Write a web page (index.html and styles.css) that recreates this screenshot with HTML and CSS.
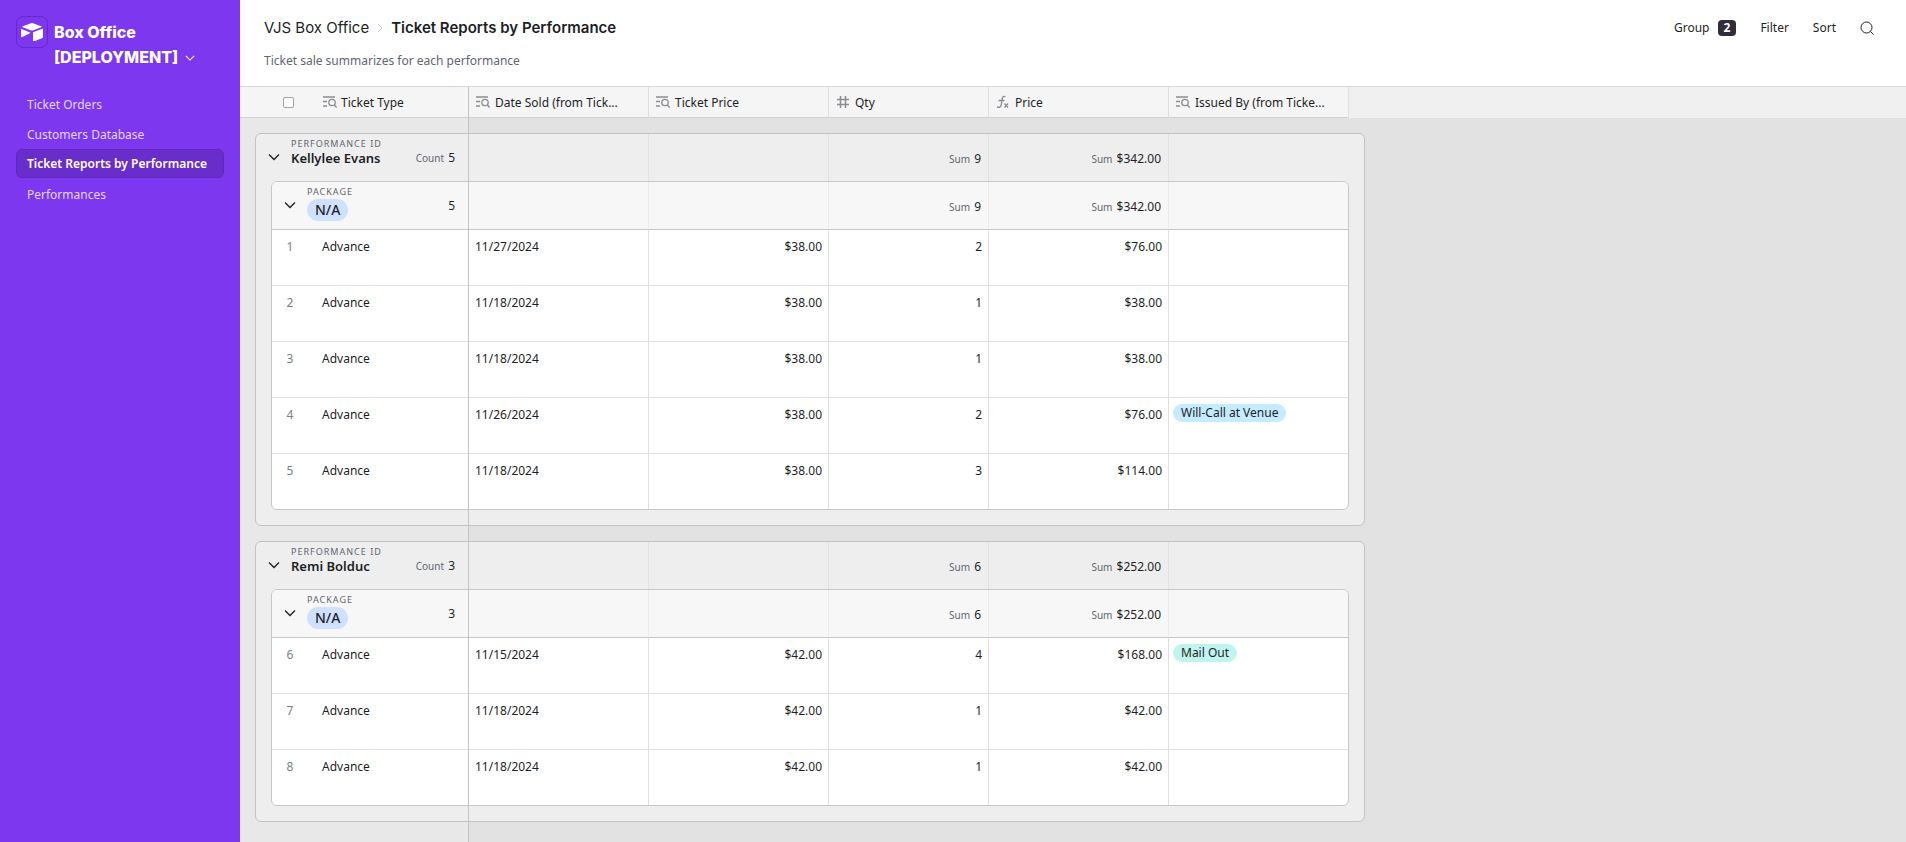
FILE: index.html
```html
<!DOCTYPE html>
<html lang="en">
<head>
<meta charset="utf-8">
<title>Ticket Reports by Performance</title>
<link rel="stylesheet" href="styles.css">
</head>
<body>
<svg class="sprite" aria-hidden="true">
  <symbol id="lookup" viewBox="0 0 14 14"><path d="M0 2h12M0 6.500h4M0 11h4" stroke-width="1.500"/><circle cx="9" cy="7.500" r="3.200" stroke-width="1.300"/><path d="M11.200 9.800l2.400 2.700" stroke-width="1.400"/></symbol>
  <symbol id="hash" viewBox="0 0 14 14"><path d="M1 4.500h12M1 9.500h12M4.500 1v12M9.500 1v12" stroke-width="1.500"/></symbol>
  <symbol id="formula" viewBox="0 0 14 14"><path d="M9.500 1.600C7 .8 6.500 2 6.200 4L5.200 10c-.3 2-1.700 2.800-4.200 2M2.500 5.500h6" stroke-width="1.400"/><path d="M8.500 8.500l3.500 4M12 8.500L8.500 12.500" stroke-width="1.300"/></symbol>
  <symbol id="down" viewBox="0 0 12 12"><path d="M1 3.500l5 5 5-5" stroke-width="1.300"/></symbol>
</svg>
<div class="app">
  <aside class="sidebar">
    <div class="brand">
      <span class="logo"><svg viewBox="0 0 22 18"><path d="M1.300 3.500L10 .3q1-.4 2 0l8.700 3.200q.6.300 0 .6L12 7.400q-1 .4-2 0L1.300 4.100q-.6-.3 0-.6zM12 9.300L21.300 5.700q.6-.2.600.4v8.200q0 .5-.4.700L12.600 18.500q-.6.200-.6-.4zM.1 6.300q0-.6.600-.4L9 9.400q.6.400 0 .8L.7 14.200q-.6.200-.6-.4z"/></svg></span>
      <button class="brand-name" type="button">Box Office [DEPLOYMENT] <svg class="icon small"><use href="#down"/></svg></button>
    </div>
    <nav class="nav">
      <a href="#">Ticket Orders</a>
      <a href="#">Customers Database</a>
      <a href="#" class="active" aria-current="page">Ticket Reports by Performance</a>
      <a href="#">Performances</a>
    </nav>
  </aside>
  <main class="main">
    <header class="top">
      <div>
        <div class="crumbs"><a href="#">VJS Box Office</a><svg class="crumb-arrow" viewBox="0 0 6 10"><path d="M1 1l4 4-4 4"/></svg><h1>Ticket Reports by Performance</h1></div>
        <p class="subtitle">Ticket sale summarizes for each performance</p>
      </div>
      <div class="tools">
        <button type="button">Group <span class="count-badge">2</span></button>
        <button type="button">Filter</button>
        <button type="button">Sort</button>
        <button type="button" aria-label="Search"><svg class="search" viewBox="0 0 14 14"><circle cx="6.500" cy="6.500" r="5.500"/><path d="M10.500 10.500l3 3"/></svg></button>
      </div>
    </header>
    <div class="grid">
      <div class="columns">
        <table class="heads">
          <colgroup><col class="c-lead"><col class="c-wide"><col class="c-wide"><col class="c-qty"><col class="c-wide"><col class="c-wide"></colgroup>
          <thead><tr>
            <th class="lead"><div class="head"><input type="checkbox" aria-label="Select all rows"><svg class="icon type"><use href="#lookup"/></svg><span>Ticket Type</span></div></th>
            <th><div class="head"><svg class="icon type"><use href="#lookup"/></svg><span>Date Sold (from Tick...</span></div></th>
            <th><div class="head"><svg class="icon type"><use href="#lookup"/></svg><span>Ticket Price</span></div></th>
            <th><div class="head"><svg class="icon type"><use href="#hash"/></svg><span>Qty</span></div></th>
            <th><div class="head"><svg class="icon type"><use href="#formula"/></svg><span>Price</span></div></th>
            <th><div class="head"><svg class="icon type"><use href="#lookup"/></svg><span>Issued By (from Ticke...</span></div></th>
          </tr></thead>
        </table>
      </div>
      <div class="groups">
        <section class="group">
          <div class="summary">
            <div class="who"><button class="toggle" type="button" aria-label="Collapse Kellylee Evans"><svg class="icon"><use href="#down"/></svg></button><div class="label"><span class="field">PERFORMANCE ID</span><h2>Kellylee Evans</h2></div><span class="total"><small>Count</small> 5</span></div>
            <div></div><div></div>
            <div class="sum"><small>Sum</small> 9</div>
            <div class="sum"><small>Sum</small> $342.00</div>
            <div></div>
          </div>
          <div class="card">
            <table class="rows">
              <colgroup><col class="c-first"><col class="c-wide"><col class="c-wide"><col class="c-qty"><col class="c-wide"><col class="c-last"></colgroup>
              <thead><tr>
                <th><div class="who"><button class="toggle" type="button" aria-label="Collapse N/A"><svg class="icon"><use href="#down"/></svg></button><div class="label"><span class="field">PACKAGE</span><span class="pill package">N/A</span></div><span class="total">5</span></div></th>
                <th></th><th></th>
                <th><div class="sum"><small>Sum</small> 9</div></th>
                <th><div class="sum"><small>Sum</small> $342.00</div></th>
                <th></th>
              </tr></thead>
              <tbody>
                <tr><td><span class="num">1</span>Advance</td><td>11/27/2024</td><td class="n">$38.00</td><td class="n">2</td><td class="n">$76.00</td><td></td></tr>
                <tr><td><span class="num">2</span>Advance</td><td>11/18/2024</td><td class="n">$38.00</td><td class="n">1</td><td class="n">$38.00</td><td></td></tr>
                <tr><td><span class="num">3</span>Advance</td><td>11/18/2024</td><td class="n">$38.00</td><td class="n">1</td><td class="n">$38.00</td><td></td></tr>
                <tr><td><span class="num">4</span>Advance</td><td>11/26/2024</td><td class="n">$38.00</td><td class="n">2</td><td class="n">$76.00</td><td class="tag"><span class="pill sky">Will-Call at Venue</span></td></tr>
                <tr><td><span class="num">5</span>Advance</td><td>11/18/2024</td><td class="n">$38.00</td><td class="n">3</td><td class="n">$114.00</td><td></td></tr>
              </tbody>
            </table>
          </div>
        </section>
        <section class="group">
          <div class="summary">
            <div class="who"><button class="toggle" type="button" aria-label="Collapse Remi Bolduc"><svg class="icon"><use href="#down"/></svg></button><div class="label"><span class="field">PERFORMANCE ID</span><h2>Remi Bolduc</h2></div><span class="total"><small>Count</small> 3</span></div>
            <div></div><div></div>
            <div class="sum"><small>Sum</small> 6</div>
            <div class="sum"><small>Sum</small> $252.00</div>
            <div></div>
          </div>
          <div class="card">
            <table class="rows">
              <colgroup><col class="c-first"><col class="c-wide"><col class="c-wide"><col class="c-qty"><col class="c-wide"><col class="c-last"></colgroup>
              <thead><tr>
                <th><div class="who"><button class="toggle" type="button" aria-label="Collapse N/A"><svg class="icon"><use href="#down"/></svg></button><div class="label"><span class="field">PACKAGE</span><span class="pill package">N/A</span></div><span class="total">3</span></div></th>
                <th></th><th></th>
                <th><div class="sum"><small>Sum</small> 6</div></th>
                <th><div class="sum"><small>Sum</small> $252.00</div></th>
                <th></th>
              </tr></thead>
              <tbody>
                <tr><td><span class="num">6</span>Advance</td><td>11/15/2024</td><td class="n">$42.00</td><td class="n">4</td><td class="n">$168.00</td><td class="tag"><span class="pill mint">Mail Out</span></td></tr>
                <tr><td><span class="num">7</span>Advance</td><td>11/18/2024</td><td class="n">$42.00</td><td class="n">1</td><td class="n">$42.00</td><td></td></tr>
                <tr><td><span class="num">8</span>Advance</td><td>11/18/2024</td><td class="n">$42.00</td><td class="n">1</td><td class="n">$42.00</td><td></td></tr>
              </tbody>
            </table>
          </div>
        </section>
      </div>
    </div>
  </main>
</div>
</body>
</html>
```
FILE: styles.css
```css
* { box-sizing: border-box; }

:root {
  --text: #1d1f25;
  --muted: #616670;
  --line: #c6c7c8;
  --soft-line: #dddfe1;
}

body {
  margin: 0;
  color: var(--text);
  font: 12px/18px "Noto Sans", "Open Sans", sans-serif;
}

button {
  padding: 0;
  border: 0;
  background: none;
  color: inherit;
  font: inherit;
  cursor: pointer;
}

a { color: inherit; text-decoration: none; }
svg { display: block; fill: none; stroke: currentColor; }
small { font-size: 10px; color: var(--muted); }
h1, h2, p { margin: 0; }

.sprite { position: absolute; width: 0; height: 0; }
.icon { width: 12px; height: 12px; flex: none; }
.app { display: flex; min-height: 100vh; }

/* Sidebar */
.sidebar {
  flex: none;
  width: 240px;
  padding: 16px;
  background: #7c37ef;
  color: #fff;
}
.brand { display: flex; gap: 6px; }
.logo {
  display: grid;
  place-items: center;
  flex: none;
  width: 32px;
  height: 32px;
  border: 1px solid #652bc9;
  border-radius: 7px;
}
.logo svg { width: 22px; height: 18px; fill: #fff; stroke: none; }
.brand-name {
  padding-top: 4px;
  text-align: left;
  font: 800 16px/25px Inter, sans-serif;
}
.brand-name svg { display: inline; width: 10px; height: 10px; margin-left: 3px; }
.nav { display: grid; margin-top: 19px; }
.nav a {
  padding: 6px 10px 4px;
  border: 1px solid transparent;
  border-radius: 6px;
  color: #e5d7fc;
}
.nav .active {
  padding-top: 5px;
  margin-bottom: 1px;
  border-color: #5f27bd;
  background: #692dcb;
  color: #fff;
  font-weight: 600;
}

/* Page header */
.main { display: flex; flex-direction: column; flex: 1; min-width: 0; }
.top {
  display: flex;
  justify-content: space-between;
  align-items: flex-start;
  padding: 16px 24px;
  border-bottom: 1px solid #d8d9da;
}
.crumbs { display: flex; align-items: center; font: 15px/24px Inter, sans-serif; }
.crumbs h1 { font: 600 15px/24px Inter, sans-serif; }
.crumb-arrow { width: 6px; height: 10px; margin: 0 8px; color: #c4c6ca; }
.subtitle { margin-top: 12px; color: var(--muted); }
.tools { display: flex; align-items: center; gap: 24px; height: 24px; padding-right: 8px; }
.tools button { display: flex; align-items: center; gap: 8px; }
.count-badge {
  padding: 0 6px;
  border-radius: 4px;
  background: #332c3a;
  color: #fff;
  font-weight: 700;
  font-size: 12px;
  line-height: 16px;
}
.search { width: 14px; height: 14px; }

/* Grid */
.grid {
  position: relative;
  display: flex;
  flex-direction: column;
  flex: 1;
  background: #e2e2e2 linear-gradient(#e8e8e8, #e8e8e8) no-repeat 0 0 / 228px 100%;
}
.grid::after {
  content: "";
  position: absolute;
  top: 0;
  bottom: 0;
  left: 228px;
  width: 1px;
  background: #c3c3c5;
}
table { table-layout: fixed; border-spacing: 0; }
th, td { padding: 0; text-align: left; font-weight: 400; }
.c-lead { width: 229px; }
.c-first { width: 197px; }
.c-wide { width: 180px; }
.c-qty { width: 160px; }
.c-last { width: 179px; }

.columns { background: #f0f0f0; }
.heads { width: 1109px; background: #f5f5f5; }
.heads th { border-right: 1px solid var(--soft-line); border-bottom: 1px solid #d0d1d2; }
.head { display: flex; align-items: center; gap: 5px; height: 30px; padding-left: 7px; }
.lead .head { gap: 4px; padding-left: 43px; }
.lead input {
  appearance: none;
  width: 11px;
  height: 11px;
  margin: 0 25px 0 0;
  border: 1px solid #a0a3a8;
  border-radius: 2px;
  background: #fff;
}
.head span { padding-top: 1px; }
.type { width: 14px; height: 14px; color: #8b8d92; }

.groups { display: grid; gap: 15px; justify-content: start; padding: 15px; }
.group {
  padding: 0 15px 15px 0;
  border: 1px solid #c1c2c3;
  border-radius: 6px;
  background: #eee;
}
.summary { display: grid; grid-template-columns: 213px 180px 180px 160px 180px 180px; height: 47px; }
.summary > div { border-right: 1px solid #e2e3e4; }
.summary > div:last-child { border-right: 0; }
.who { display: flex; align-items: flex-start; height: 47px; padding: 3px 13px 0 12px; }
.toggle { padding: 14px 0 0; }
.label { display: flex; flex-direction: column; align-items: flex-start; flex: 1; margin-left: 11px; }
.field { color: var(--muted); font-size: 9px; line-height: 14px; letter-spacing: 1px; }
h2 { font-size: 13px; line-height: 14px; font-weight: 600; }
.total { padding-top: 12px; }
.total small, .sum small { margin-right: 1px; }
.sum { padding: 16px 7px 0 0; text-align: right; }

.card {
  margin-left: 15px;
  overflow: hidden;
  border: 1px solid var(--line);
  border-radius: 6px;
  background: #fff;
}
.rows { width: 1076px; }
.rows th { height: 48px; vertical-align: top; border-right: 1px solid #ececec; border-bottom: 1px solid var(--line); background: #f7f7f7; }
.rows td { height: 56px; padding: 8px 6px 0; vertical-align: top; border-right: 1px solid var(--soft-line); border-bottom: 1px solid var(--soft-line); }
.rows th:last-child, .rows td:last-child { border-right: 0; }
.rows tbody tr:last-child td { height: 55px; border-bottom: 0; }
.rows .n { text-align: right; }
.rows .tag { padding: 6px 4px 0; }
.num { display: inline-block; width: 24px; margin-right: 20px; text-align: center; color: #7a7e86; }
.pill { display: inline-block; padding: 0 8px; border-radius: 11px; }
.package { font-size: 14px; line-height: 22px; font-weight: 500; background: #d0e1ff; }
.sky { background: #c4ebff; }
.mint { background: #c0f5ef; }
```
